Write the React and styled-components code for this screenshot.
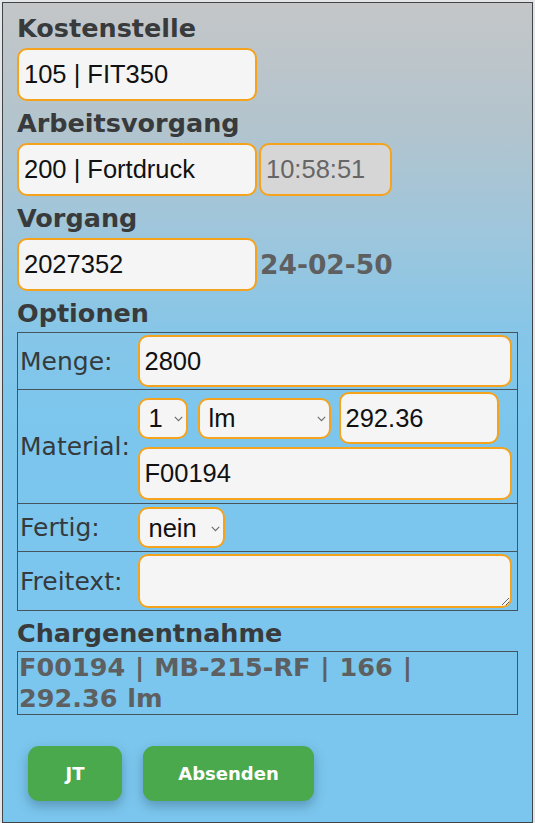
import React from "react";
import styled, { createGlobalStyle } from "styled-components";

const Global = createGlobalStyle`
  html, body { margin: 0; padding: 0; background: #e4e6e7; }
  * { box-sizing: border-box; }
`;

const Page = styled.div`
  margin: 2px 2px 0 2px;
  height: calc(100vh - 2px);
  border: 1px solid #3f4548;
  padding: 10px 14px 0 14px;
  background: linear-gradient(
    180deg,
    #c4c6c8 0px,
    #b3c4cd 120px,
    #9ec6dc 230px,
    #86c6e8 330px,
    #7cc6ee 420px,
    #7bc6ee 100%
  );
`;

const Section = styled.section`
  margin-top: ${(p) => (p.$first ? 0 : 7)}px;
`;

const Heading = styled.h2`
  margin: 0 0 ${(p) => p.$gap ?? 5}px 0;
  font-family: "DejaVu Sans", Verdana, sans-serif;
  font-weight: 700;
  font-size: 25.5px;
  line-height: 30px;
  color: #383a3b;
`;

const FieldRow = styled.div`
  display: flex;
  align-items: center;
  gap: ${(p) => p.$gap ?? 2}px;
`;

const fieldBase = `
  font-family: "Liberation Sans", Arial, sans-serif;
  font-size: 25.5px;
  color: #111;
  background: #f4f5f4;
  border: 2px solid #f5a31c;
  border-radius: 10px;
  outline: none;
`;

const TextInput = styled.input`
  ${fieldBase}
  width: ${(p) => (p.$w ? `${p.$w}px` : "100%")};
  height: ${(p) => p.$h ?? 53}px;
  padding: 0 5px;
  display: block;
`;

const TimeInput = styled(TextInput)`
  background: #d6d6d6;
  color: #666;
`;

const SelectWrap = styled.div`
  position: relative;
  display: inline-block;
  flex: none;
  margin-left: ${(p) => p.$ml ?? 0}px;
`;

const Select = styled.select`
  ${fieldBase}
  appearance: none;
  -webkit-appearance: none;
  display: block;
  width: ${(p) => p.$w}px;
  height: ${(p) => p.$h ?? 41}px;
  padding: 0 16px 0 9px;
`;

const Chevron = styled.svg`
  position: absolute;
  right: 5px;
  top: 50%;
  width: 9px;
  height: 6px;
  margin-top: -2px;
  pointer-events: none;
`;

const TextArea = styled.textarea`
  ${fieldBase}
  display: block;
  width: 100%;
  height: 54px;
  padding: 6px 5px;
  resize: both;
`;

const BigValue = styled.span`
  font-family: "DejaVu Sans", Verdana, sans-serif;
  font-weight: 700;
  font-size: 26.5px;
  color: #5e5f60;
  padding-left: 1px;
`;

const OptTable = styled.table`
  width: 100%;
  border-collapse: collapse;
  border: 1px solid #47545c;
`;

const Row = styled.tr`
  border-top: 1px solid #47545c;
`;

const LabelCell = styled.td`
  width: 119px;
  padding: 0 0 0 2px;
  font-family: "DejaVu Sans", Verdana, sans-serif;
  font-size: 25px;
  color: #353a3d;
  white-space: nowrap;
  vertical-align: middle;
`;

const ValueCell = styled.td`
  padding: ${(p) => p.$pad ?? "2px 5px 2px 1px"};
  vertical-align: middle;
`;

const Stack = styled.div`
  display: flex;
  flex-direction: column;
  gap: 3px;
`;

const ChargeBox = styled.div`
  border: 1px solid #47545c;
  padding: 0 1px;
  font-family: "DejaVu Sans", Verdana, sans-serif;
  font-weight: 700;
  font-size: 25.5px;
  line-height: 31px;
  word-spacing: 1px;
  color: #5e5f60;
`;

const ButtonRow = styled.div`
  display: flex;
  gap: 21px;
  margin-top: 31px;
  padding-left: 11px;
`;

const Button = styled.button`
  width: ${(p) => p.$w}px;
  height: 55px;
  border: none;
  border-radius: 11px;
  background: #4aa94d;
  color: #fff;
  font-family: "DejaVu Sans", Verdana, sans-serif;
  font-weight: 700;
  font-size: 18px;
  box-shadow: 0 5px 12px rgba(30, 60, 80, 0.35);
  cursor: pointer;
`;

function Dropdown({ w, h, ml, value, options }) {
  return (
    <SelectWrap $ml={ml}>
      <Select $w={w} $h={h} defaultValue={value}>
        {options.map((o) => (
          <option key={o}>{o}</option>
        ))}
      </Select>
      <Chevron viewBox="0 0 9 6" aria-hidden="true">
        <path d="M0.8 0.8 L4.5 4.6 L8.2 0.8" fill="none" stroke="#6a6a6a" strokeWidth="1.1" />
      </Chevron>
    </SelectWrap>
  );
}

export default function App() {
  return (
    <>
      <Global />
      <Page>
        <Section $first>
          <Heading>Kostenstelle</Heading>
          <FieldRow>
            <TextInput $w={240} defaultValue="105 | FIT350" />
          </FieldRow>
        </Section>
        <Section>
          <Heading>Arbeitsvorgang</Heading>
          <FieldRow>
            <TextInput $w={240} defaultValue="200 | Fortdruck" />
            <TimeInput $w={133} defaultValue="10:58:51" readOnly />
          </FieldRow>
        </Section>
        <Section>
          <Heading>Vorgang</Heading>
          <FieldRow>
            <TextInput $w={240} defaultValue="2027352" />
            <BigValue>24-02-50</BigValue>
          </FieldRow>
        </Section>
        <Section>
          <Heading $gap={4}>Optionen</Heading>
          <OptTable>
            <tbody>
              <Row>
                <LabelCell>Menge:</LabelCell>
                <ValueCell>
                  <TextInput $h={52} defaultValue="2800" />
                </ValueCell>
              </Row>
              <Row>
                <LabelCell>Material:</LabelCell>
                <ValueCell $pad="2px 5px 3px 1px">
                  <Stack>
                    <FieldRow $gap={0}>
                      <Dropdown w={50} value="1" options={["1", "2"]} />
                      <Dropdown w={133} ml={10} value="lm" options={["lm", "qm"]} />
                      <TextInput
                        $w={160}
                        $h={52}
                        defaultValue="292.36"
                        style={{ marginLeft: 8 }}
                      />
                    </FieldRow>
                    <TextInput $h={53} defaultValue="F00194" />
                  </Stack>
                </ValueCell>
              </Row>
              <Row>
                <LabelCell>Fertig:</LabelCell>
                <ValueCell $pad="3px 5px 3px 1px">
                  <Dropdown w={87} value="nein" options={["nein", "ja"]} />
                </ValueCell>
              </Row>
              <Row>
                <LabelCell>Freitext:</LabelCell>
                <ValueCell>
                  <TextArea />
                </ValueCell>
              </Row>
            </tbody>
          </OptTable>
        </Section>
        <Section>
          <Heading $gap={3}>Chargenentnahme</Heading>
          <ChargeBox>F00194 | MB-215-RF | 166 | 292.36 lm</ChargeBox>
        </Section>
        <ButtonRow>
          <Button $w={94}>JT</Button>
          <Button $w={171}>Absenden</Button>
        </ButtonRow>
      </Page>
    </>
  );
}
